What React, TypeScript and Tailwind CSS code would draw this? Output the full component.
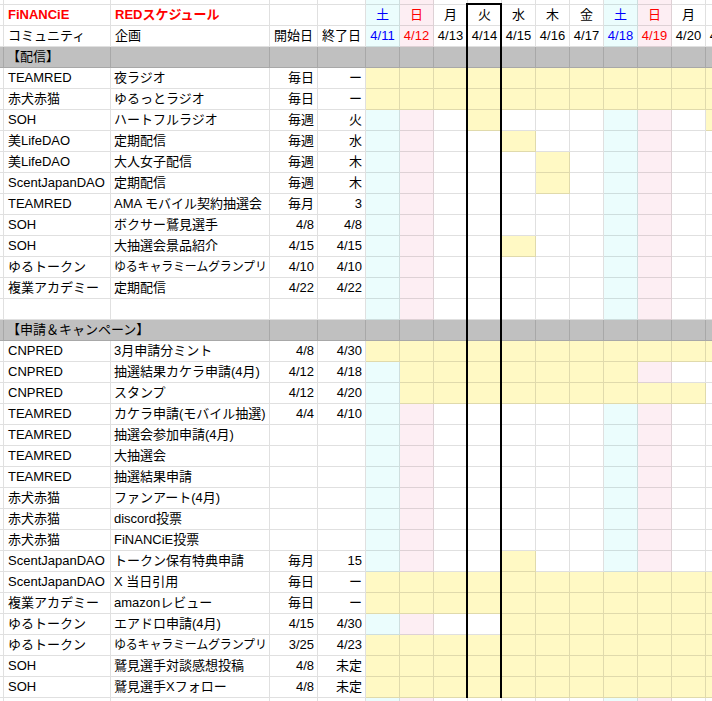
import React from 'react';

type Kind = 'sat' | 'sun' | '';
type Day = { w: string; d: string; k: Kind };

const days: Day[] = [
  { w: '土', d: '4/11', k: 'sat' },
  { w: '日', d: '4/12', k: 'sun' },
  { w: '月', d: '4/13', k: '' },
  { w: '火', d: '4/14', k: '' },
  { w: '水', d: '4/15', k: '' },
  { w: '木', d: '4/16', k: '' },
  { w: '金', d: '4/17', k: '' },
  { w: '土', d: '4/18', k: 'sat' },
  { w: '日', d: '4/19', k: 'sun' },
  { w: '月', d: '4/20', k: '' },
  { w: '火', d: '4/21', k: '' },
];

type Row =
  | { t: 'strip' }
  | { t: 'head1' }
  | { t: 'head2' }
  | { t: 'gray'; label: string; span?: boolean }
  | { t: 'blank' }
  | { t: 'data'; a: string; b: string; c?: string; d?: string; y: number[]; small?: boolean };

const ALL = [0, 1, 2, 3, 4, 5, 6, 7, 8, 9, 10];
const range = (s: number, e: number) => ALL.filter((i) => i >= s && i <= e);

const rows: Row[] = [
  { t: 'strip' },
  { t: 'head1' },
  { t: 'head2' },
  { t: 'gray', label: '【配信】' },
  { t: 'data', a: 'TEAMRED', b: '夜ラジオ', c: '毎日', d: 'ー', y: ALL },
  { t: 'data', a: '赤犬赤猫', b: 'ゆるっとラジオ', c: '毎日', d: 'ー', y: ALL },
  { t: 'data', a: 'SOH', b: 'ハートフルラジオ', c: '毎週', d: '火', y: [3, 10] },
  { t: 'data', a: '美LifeDAO', b: '定期配信', c: '毎週', d: '水', y: [4] },
  { t: 'data', a: '美LifeDAO', b: '大人女子配信', c: '毎週', d: '木', y: [5] },
  { t: 'data', a: 'ScentJapanDAO', b: '定期配信', c: '毎週', d: '木', y: [5] },
  { t: 'data', a: 'TEAMRED', b: 'AMA モバイル契約抽選会', c: '毎月', d: '3', y: [] },
  { t: 'data', a: 'SOH', b: 'ボクサー鷲見選手', c: '4/8', d: '4/8', y: [] },
  { t: 'data', a: 'SOH', b: '大抽選会景品紹介', c: '4/15', d: '4/15', y: [4] },
  { t: 'data', a: 'ゆるトークン', b: 'ゆるキャラミームグランプリ', c: '4/10', d: '4/10', y: [], small: true },
  { t: 'data', a: '複業アカデミー', b: '定期配信', c: '4/22', d: '4/22', y: [] },
  { t: 'blank' },
  { t: 'gray', label: '【申請＆キャンペーン】', span: true },
  { t: 'data', a: 'CNPRED', b: '3月申請分ミント', c: '4/8', d: '4/30', y: ALL },
  { t: 'data', a: 'CNPRED', b: '抽選結果カケラ申請(4月)', c: '4/12', d: '4/18', y: range(1, 7) },
  { t: 'data', a: 'CNPRED', b: 'スタンプ', c: '4/12', d: '4/20', y: range(1, 9) },
  { t: 'data', a: 'TEAMRED', b: 'カケラ申請(モバイル抽選)', c: '4/4', d: '4/10', y: [] },
  { t: 'data', a: 'TEAMRED', b: '抽選会参加申請(4月)', y: [] },
  { t: 'data', a: 'TEAMRED', b: '大抽選会', y: [] },
  { t: 'data', a: 'TEAMRED', b: '抽選結果申請', y: [] },
  { t: 'data', a: '赤犬赤猫', b: 'ファンアート(4月)', y: [] },
  { t: 'data', a: '赤犬赤猫', b: 'discord投票', y: [] },
  { t: 'data', a: '赤犬赤猫', b: 'FiNANCiE投票', y: [] },
  { t: 'data', a: 'ScentJapanDAO', b: 'トークン保有特典申請', c: '毎月', d: '15', y: [4] },
  { t: 'data', a: 'ScentJapanDAO', b: 'X 当日引用', c: '毎日', d: 'ー', y: ALL },
  { t: 'data', a: '複業アカデミー', b: 'amazonレビュー', c: '毎日', d: 'ー', y: ALL },
  { t: 'data', a: 'ゆるトークン', b: 'エアドロ申請(4月)', c: '4/15', d: '4/30', y: range(4, 10) },
  { t: 'data', a: 'ゆるトークン', b: 'ゆるキャラミームグランプリ', c: '3/25', d: '4/23', y: ALL, small: true },
  { t: 'data', a: 'SOH', b: '鷲見選手対談感想投稿', c: '4/8', d: '未定', y: ALL },
  { t: 'data', a: 'SOH', b: '鷲見選手Xフォロー', c: '4/8', d: '未定', y: ALL },
  { t: 'strip' },
];

const BD = 'border-r border-b border-[rgba(0,0,0,0.12)] overflow-hidden whitespace-nowrap';

function dayBg(k: Kind, yellow: boolean) {
  if (yellow) return 'bg-[#fff9c4]';
  if (k === 'sat') return 'bg-[#ebfdfd]';
  if (k === 'sun') return 'bg-[#fdeef3]';
  return 'bg-white';
}

function dayColor(k: Kind) {
  if (k === 'sat') return 'text-[#0000ff]';
  if (k === 'sun') return 'text-[#ff0000]';
  return 'text-black';
}

function RowView({ r }: { r: Row }) {
  if (r.t === 'strip') {
    return (
      <>
        <div className={`${BD} h-[5px] bg-white`} />
        <div className={`${BD} h-[5px] bg-white`} />
        <div className={`${BD} h-[5px] bg-white`} />
        <div className={`${BD} h-[5px] bg-white`} />
        <div className={`${BD} h-[5px] bg-white`} />
        {days.map((d, i) => (
          <div key={i} className={`${BD} h-[5px] ${dayBg(d.k, false)}`} />
        ))}
      </>
    );
  }
  if (r.t === 'gray') {
    return (
      <>
        <div className={`${BD} h-[21px] bg-[#c0c0c0]`} />
        {r.span ? (
          <div className={`${BD} col-span-2 h-[21px] bg-[#c0c0c0] flex items-center pl-[3px]`}>{r.label}</div>
        ) : (
          <>
            <div className={`${BD} h-[21px] bg-[#c0c0c0] flex items-center pl-[3px]`}>{r.label}</div>
            <div className={`${BD} h-[21px] bg-[#c0c0c0]`} />
          </>
        )}
        <div className={`${BD} h-[21px] bg-[#c0c0c0]`} />
        <div className={`${BD} h-[21px] bg-[#c0c0c0]`} />
        {days.map((_, i) => (
          <div key={i} className={`${BD} h-[21px] bg-[#c0c0c0]`} />
        ))}
      </>
    );
  }
  if (r.t === 'head1') {
    return (
      <>
        <div className={`${BD} h-[21px] bg-white`} />
        <div className={`${BD} h-[21px] bg-white flex items-center pl-[4px] font-bold text-[#ff0000]`}>FiNANCiE</div>
        <div className={`${BD} h-[21px] bg-white flex items-center pl-[4px] font-bold text-[#ff0000]`}>REDスケジュール</div>
        <div className={`${BD} h-[21px] bg-white`} />
        <div className={`${BD} h-[21px] bg-white`} />
        {days.map((d, i) => (
          <div key={i} className={`${BD} h-[21px] ${dayBg(d.k, false)} ${dayColor(d.k)} flex items-center justify-center`}>
            {d.w}
          </div>
        ))}
      </>
    );
  }
  if (r.t === 'head2') {
    return (
      <>
        <div className={`${BD} h-[21px] bg-white`} />
        <div className={`${BD} h-[21px] bg-white flex items-center pl-[4px]`}>コミュニティ</div>
        <div className={`${BD} h-[21px] bg-white flex items-center pl-[4px]`}>企画</div>
        <div className={`${BD} h-[21px] bg-white flex items-center pl-[4px]`}>開始日</div>
        <div className={`${BD} h-[21px] bg-white flex items-center pl-[4px]`}>終了日</div>
        {days.map((d, i) => (
          <div key={i} className={`${BD} h-[21px] ${dayBg(d.k, false)} ${dayColor(d.k)} flex items-center justify-center`}>
            {d.d}
          </div>
        ))}
      </>
    );
  }
  if (r.t === 'blank') {
    return (
      <>
        <div className={`${BD} h-[21px] bg-white`} />
        <div className={`${BD} h-[21px] bg-white`} />
        <div className={`${BD} h-[21px] bg-white`} />
        <div className={`${BD} h-[21px] bg-white`} />
        <div className={`${BD} h-[21px] bg-white`} />
        {days.map((d, i) => (
          <div key={i} className={`${BD} h-[21px] ${dayBg(d.k, false)}`} />
        ))}
      </>
    );
  }
  return (
    <>
      <div className={`${BD} h-[21px] bg-white`} />
      <div className={`${BD} h-[21px] bg-white flex items-center pl-[4px]`}>{r.a}</div>
      <div className={`${BD} h-[21px] bg-white flex items-center pl-[3px] ${r.small ? 'text-[12px] tracking-[-0.2px]' : ''}`}>{r.b}</div>
      <div className={`${BD} h-[21px] bg-white flex items-center justify-end pr-[3px]`}>{r.c ?? ''}</div>
      <div className={`${BD} h-[21px] bg-white flex items-center justify-end pr-[3px]`}>{r.d ?? ''}</div>
      {days.map((d, i) => (
        <div key={i} className={`${BD} h-[21px] ${dayBg(d.k, r.y.includes(i))}`} />
      ))}
    </>
  );
}

export default function App() {
  return (
    <div className="w-[712px] h-[701px] overflow-hidden bg-white font-['Liberation_Sans','Noto_Sans_CJK_JP',sans-serif] text-[13px] text-black leading-[16px]">
      <div className="relative w-[740px]">
        <div className="grid grid-cols-[4px_107px_159px_48px_48px_repeat(11,34px)]">
          {rows.map((r, i) => (
            <RowView key={i} r={r} />
          ))}
        </div>
        <div className="absolute left-[466px] top-[3px] w-[36px] h-[695px] border-2 border-b-0 border-black pointer-events-none" />
      </div>
    </div>
  );
}
